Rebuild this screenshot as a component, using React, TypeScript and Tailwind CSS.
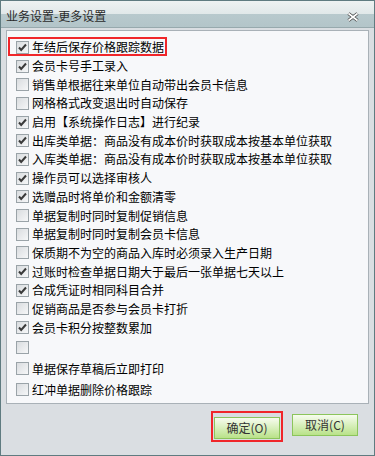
const options: { label: string; checked: boolean }[] = [
  { label: '年结后保存价格跟踪数据', checked: true },
  { label: '会员卡号手工录入', checked: true },
  { label: '销售单根据往来单位自动带出会员卡信息', checked: false },
  { label: '网格格式改变退出时自动保存', checked: false },
  { label: '启用【系统操作日志】进行纪录', checked: true },
  { label: '出库类单据：商品没有成本价时获取成本按基本单位获取', checked: true },
  { label: '入库类单据：商品没有成本价时获取成本按基本单位获取', checked: true },
  { label: '操作员可以选择审核人', checked: true },
  { label: '选赠品时将单价和金额清零', checked: true },
  { label: '单据复制时同时复制促销信息', checked: false },
  { label: '单据复制时同时复制会员卡信息', checked: false },
  { label: '保质期不为空的商品入库时必须录入生产日期', checked: false },
  { label: '过账时检查单据日期大于最后一张单据七天以上', checked: true },
  { label: '合成凭证时相同科目合并', checked: true },
  { label: '促销商品是否参与会员卡打折', checked: false },
  { label: '会员卡积分按整数累加', checked: true },
];

const extra: { label: string; checked: boolean }[] = [
  { label: '', checked: false },
  { label: '单据保存草稿后立即打印', checked: false },
  { label: '红冲单据删除价格跟踪', checked: false },
];

function Box({ checked }: { checked: boolean }) {
  return (
    <span className="flex h-[13px] w-[13px] shrink-0 items-center justify-center border border-[#9aa3a8] bg-[linear-gradient(135deg,#d9dcdf,#f6f7f8)]">
      {checked && (
        <svg width="11" height="11" viewBox="0 0 11 11">
          <path d="M2 5.5 L4.2 8 L9 2.5" fill="none" stroke="#3a3a3a" strokeWidth="2" />
        </svg>
      )}
    </span>
  );
}

function Row({ label, checked, tall, marked }: { label: string; checked: boolean; tall?: boolean; marked?: boolean }) {
  return (
    <div className={`relative flex items-center gap-[3px] ${tall ? 'h-[21px]' : 'h-[18.7px]'}`}>
      {marked && <div className="absolute -left-[8px] top-[-1px] h-[19px] w-[159px] border-2 border-[#f0262a]" />}
      <Box checked={checked} />
      <span className="whitespace-nowrap text-[12px] leading-none text-black">{label}</span>
    </div>
  );
}

export default function App() {
  return (
    <div
      className="flex h-[456px] w-[375px] flex-col border border-[#5f7b80] bg-[#dadee2]"
      style={{ fontFamily: '"Noto Sans CJK SC", "Noto Sans", sans-serif' }}
    >
      {/* 标题栏 */}
      <div className="flex h-[27px] shrink-0 items-center justify-between border-b border-[#97a9ad] bg-[linear-gradient(to_bottom,#eef2f2_0%,#e1e8e9_50%,#b8c9cd_50%,#b3c5c9_100%)] pl-[5px] pr-[15px]">
        <span className="pt-[3px] text-[12px] text-[#2b2b2b]">业务设置-更多设置</span>
        <svg width="12" height="10" viewBox="0 0 12 10" className="mt-[5px]">
          <path d="M1.5 1.5 L10.5 8.5 M10.5 1.5 L1.5 8.5" stroke="#4b4b4b" strokeWidth="3.4" />
          <path d="M1.5 1.5 L10.5 8.5 M10.5 1.5 L1.5 8.5" stroke="#ffffff" strokeWidth="1.6" />
        </svg>
      </div>

      <div className="flex flex-1 flex-col px-[5px] pt-[2px]">
        {/* 选项面板 */}
        <div className="flex h-[374px] flex-col border border-[#a9b1b7] bg-[#f7f8fa] pl-[9px] pt-[7px]">
          {options.map((o, i) => (
            <Row key={i} label={o.label} checked={o.checked} marked={i === 0} />
          ))}
          {extra.map((o, i) => (
            <Row key={`x${i}`} label={o.label} checked={o.checked} tall />
          ))}
        </div>

        {/* 按钮 */}
        <div className="flex justify-end gap-[12px] pr-[11px] pt-[10px]">
          <div className="relative">
            <div className="absolute -inset-[3px] border-2 border-[#f0262a]" />
            <button className="h-[22px] w-[66px] border border-[#8cc55b] bg-[linear-gradient(to_bottom,#f7fcef,#b9e289)] text-[12px] text-[#333]">
              确定(O)
            </button>
          </div>
          <button className="h-[22px] w-[66px] border border-[#8cc55b] bg-[linear-gradient(to_bottom,#f7fcef,#b9e289)] text-[12px] text-[#333]">
            取消(C)
          </button>
        </div>
      </div>
    </div>
  );
}
